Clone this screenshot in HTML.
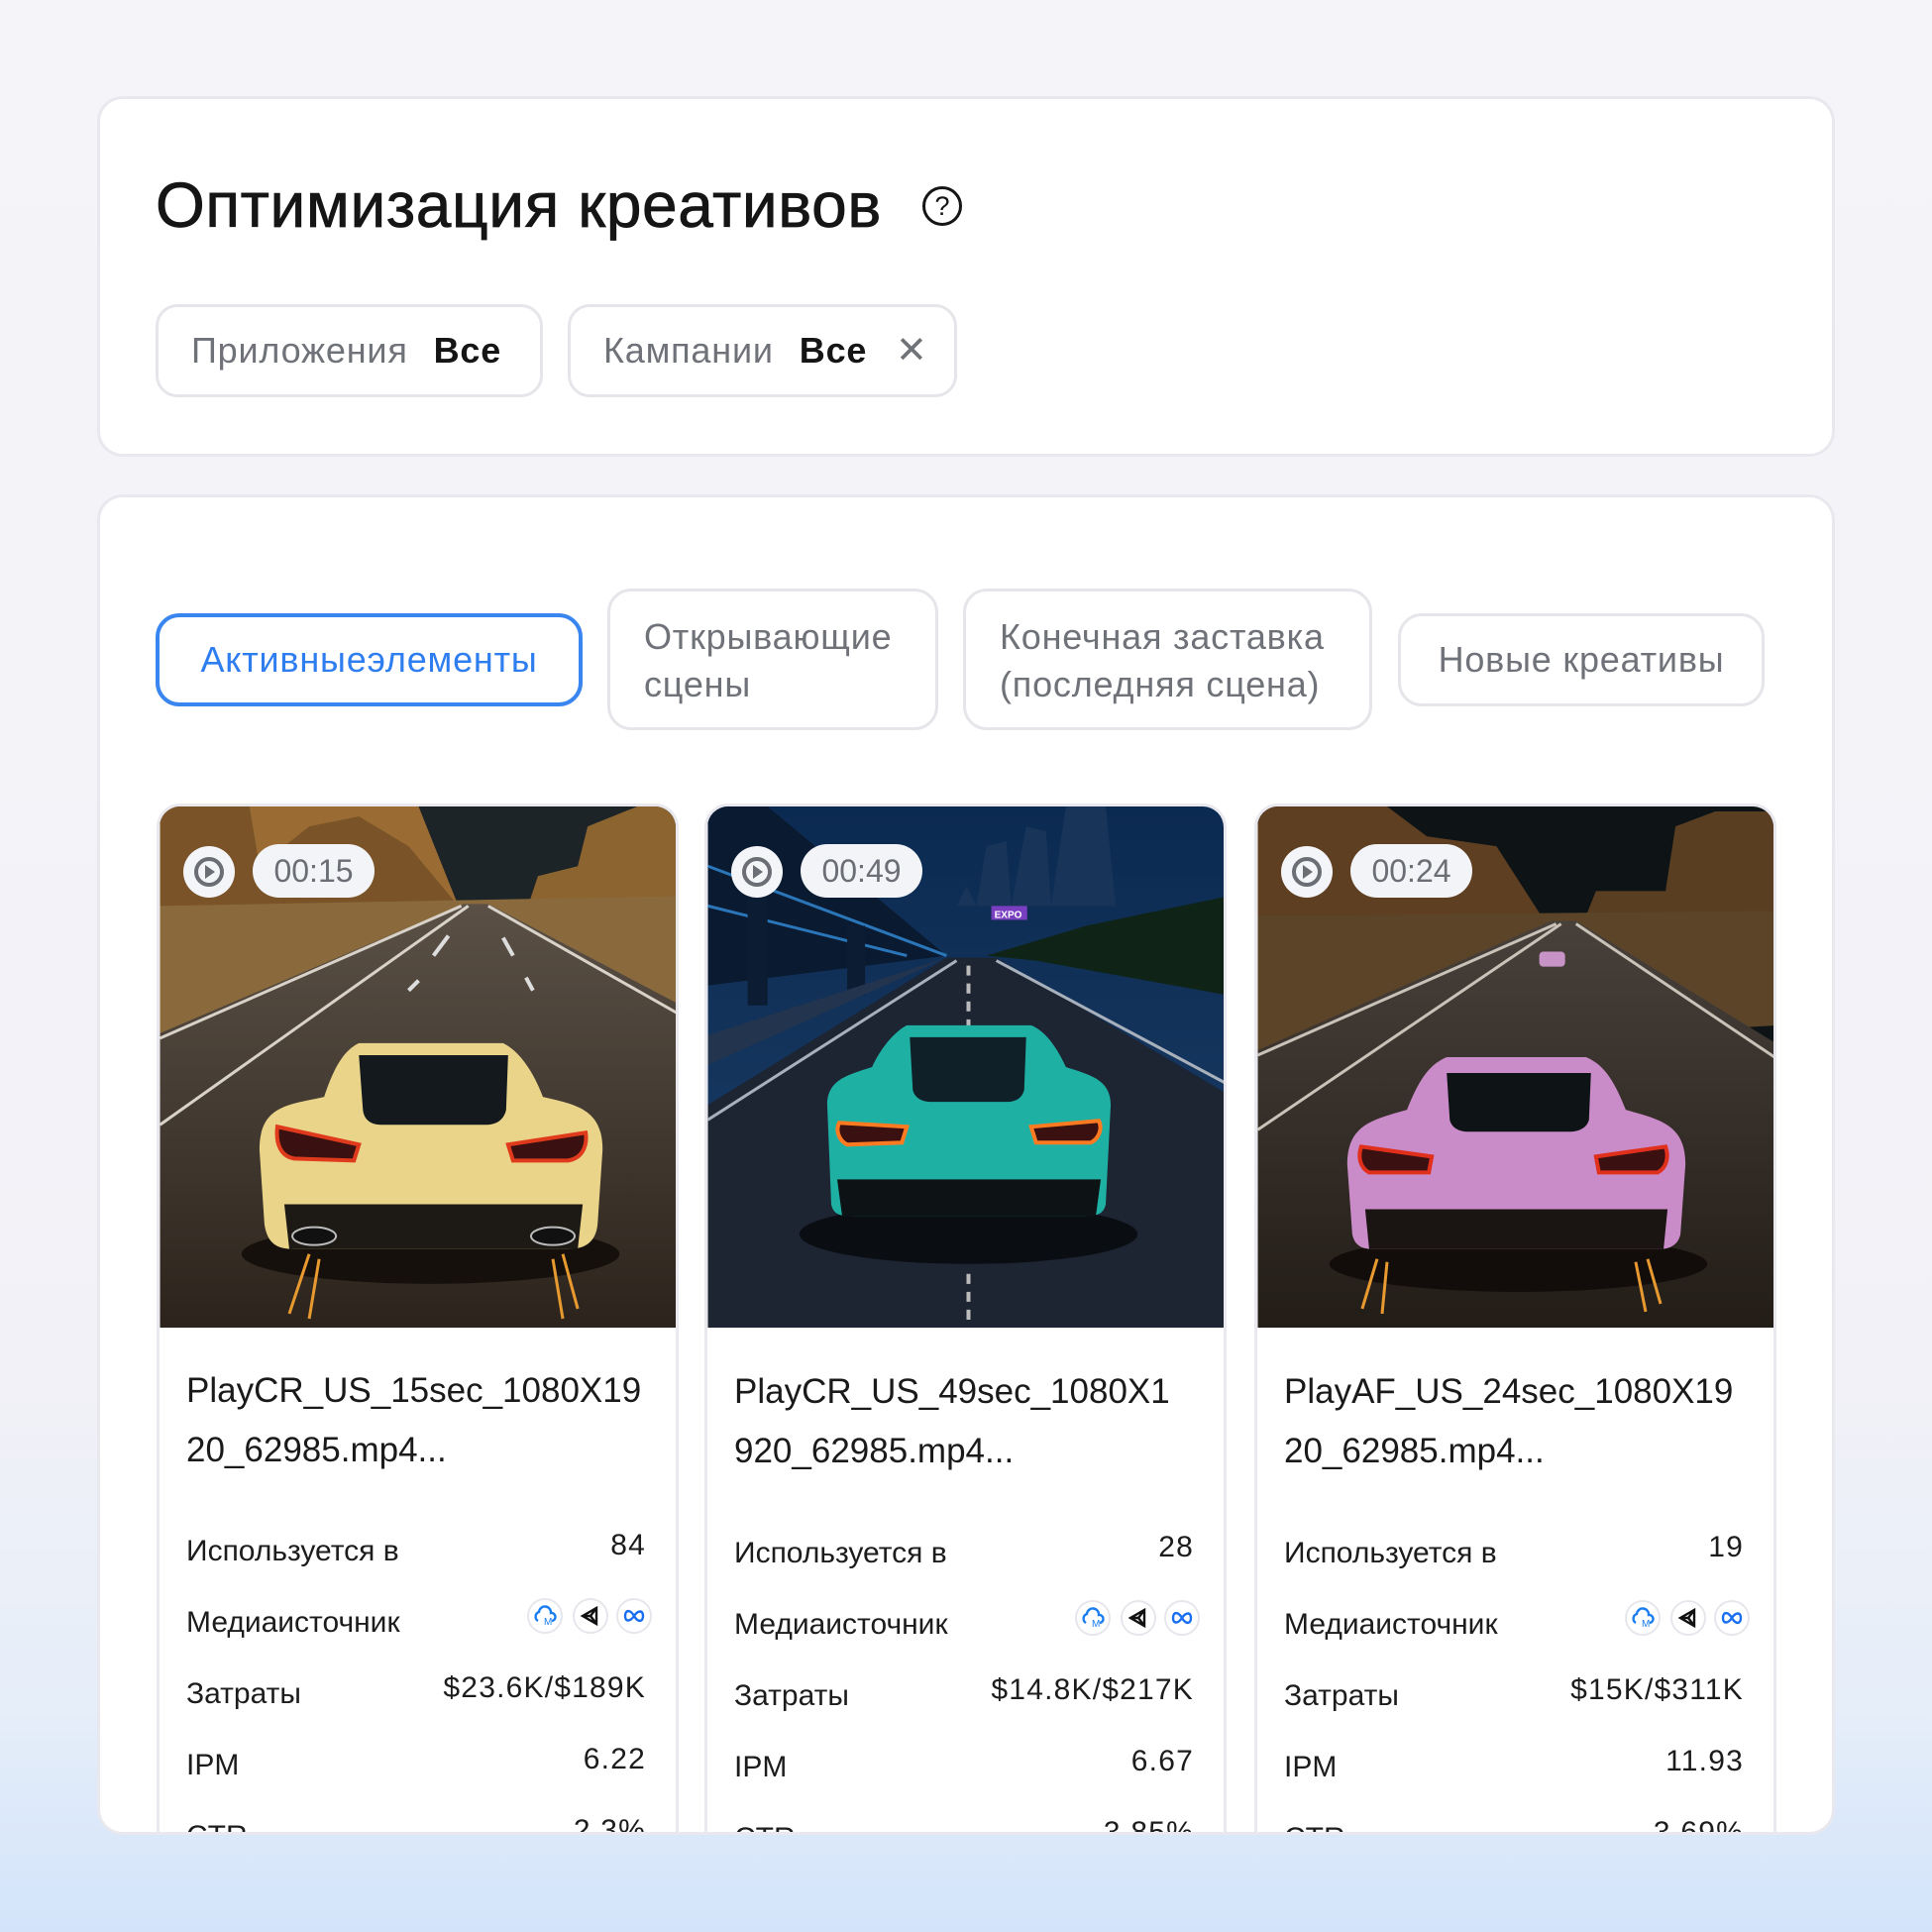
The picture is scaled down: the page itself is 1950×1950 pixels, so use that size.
<!DOCTYPE html>
<html><head><meta charset="utf-8">
<style>
*{box-sizing:border-box;margin:0;padding:0}
body{width:1950px;height:1950px;overflow:hidden;font-family:"Liberation Sans","DejaVu Sans",sans-serif;background:linear-gradient(180deg,#f5f5f9 0%,#f1f1f7 72%,#e6eef9 88%,#d3e4fa 100%);position:relative;color:#161616}
.panel{position:absolute;left:98px;width:1754px;background:#fff;border:3px solid #e8e8ee;border-radius:26px;overflow:hidden}
.title{position:absolute;left:157px;top:170px;font-size:64px;color:#151515;-webkit-text-stroke:0.7px #151515;letter-spacing:0.6px}
.help{position:absolute;left:931px;top:188px;width:40px;height:40px;border:3px solid #151515;border-radius:50%;font-size:27px;text-align:center;line-height:34px;color:#151515}
.chip{position:absolute;top:307px;height:94px;border:3px solid #e6e6ea;border-radius:22px;font-size:36px;line-height:88px;color:#6f7278;padding-left:33px;letter-spacing:0.8px}
.chip b{color:#151515;margin-left:26px}
.tab{position:absolute;border:3px solid #e6e6ea;border-radius:24px;font-size:36px;color:#6f7278;letter-spacing:0.8px}
.card{position:absolute;top:811px;width:527px;height:1200px;background:#fff;border:3px solid #e8e8ee;border-radius:24px;overflow:hidden}
.card svg{position:absolute;left:0;top:0}
.play{position:absolute;left:24px;top:40px;width:52px;height:52px;border-radius:50%;background:#f4f5f8}
.time{position:absolute;left:94px;top:38px;width:123px;height:54px;border-radius:27px;background:#f3f4f8;font-size:32px;line-height:54px;text-align:center;color:#6b6e75}
.fname{position:absolute;left:27px;top:560px;font-size:35px;line-height:60px;color:#1a1a1a;letter-spacing:0}
.row{position:absolute;left:27px;right:30px;height:40px;font-size:30px;color:#1c1c1c}
.row .l{position:absolute;left:0;top:0}
.row .r{position:absolute;right:0;top:-6px;letter-spacing:1.2px;font-size:30px}
.ic{position:absolute;top:-8px;width:36px;height:36px;border-radius:50%;border:2px solid #e6e7ec;background:#fff}
</style></head><body>

<div class="panel" style="top:97px;height:364px"></div>
<div class="title">Оптимизация креативов</div>
<div class="help">?</div>
<div class="chip" style="left:157px;width:391px">Приложения<b>Все</b></div>
<div class="chip" style="left:573px;width:393px">Кампании<b>Все</b><span style="position:absolute;left:328px;top:0;color:#6f7278;font-weight:bold;font-size:38px">✕</span></div>

<div class="panel" style="top:499px;height:1353px">
</div>
<div style="position:absolute;left:98px;top:499px;width:1754px;height:1353px;overflow:hidden;border-radius:26px">
<div class="tab" style="left:59px;top:120px;width:431px;height:94px;border:4px solid #3a86f0;color:#2f7ef0;line-height:86px;text-align:center">Активныеэлементы</div>
<div class="tab" style="left:515px;top:95px;width:334px;height:143px;padding:22px 0 0 34px;line-height:48px">Открывающие<br>сцены</div>
<div class="tab" style="left:874px;top:95px;width:413px;height:143px;padding:22px 0 0 34px;line-height:48px">Конечная заставка<br>(последняя сцена)</div>
<div class="tab" style="left:1313px;top:120px;width:370px;height:94px;line-height:88px;text-align:center">Новые креативы</div>
</div>

<div style="position:absolute;left:98px;top:499px;width:1754px;height:1350px;overflow:hidden;border-radius:0 0 26px 26px">
<div style="position:absolute;left:-98px;top:-499px;width:1950px;height:1950px">

<div class="card" style="left:158px">
<svg width="527" height="526" viewBox="0 0 524 524">
<defs><linearGradient id="r1" x1="0" y1="0" x2="0" y2="1"><stop offset="0" stop-color="#5a5046"/><stop offset="1" stop-color="#2c241c"/></linearGradient></defs>
<rect width="524" height="524" fill="#1c2427"/>
<path d="M0,0 L260,0 L300,100 L0,120Z" fill="#9a6c34"/>
<path d="M0,0 L90,0 L100,60 L150,20 L200,10 L250,40 L300,100 L0,110Z" fill="#7a5428"/>
<path d="M370,100 L380,70 L420,60 L430,20 L480,0 L524,0 L524,120Z" fill="#8c6430"/>
<path d="M0,100 L524,90 L524,220 L0,260Z" fill="#8a6a3c"/>
<path d="M305,98 L330,98 L524,200 L524,524 L0,524 L0,228Z" fill="url(#r1)"/>
<path d="M0,233 L303,100 M0,320 L310,100 M524,210 L330,100" stroke="#d8d2c8" stroke-width="3" fill="none"/>
<path d="M275,150 L290,130 M250,185 L260,175 M355,150 L345,132 M375,185 L368,172" stroke="#ddd" stroke-width="4"/>
<g>
<ellipse cx="272" cy="450" rx="190" ry="30" fill="#15100c"/>
<path d="M100,345 C100,300 130,300 165,292 C175,262 185,245 200,238 L345,238 C360,245 375,265 385,292 C420,300 445,305 445,345 L440,420 C438,440 425,445 410,445 L135,445 C118,445 108,440 105,420Z" fill="#e9d48a"/>
<path d="M200,250 L350,250 L348,305 C346,315 338,320 328,320 L222,320 C212,320 205,315 204,305Z" fill="#13191c"/>
<path d="M118,322 L200,340 L195,356 L135,354 C122,352 116,340 118,322Z" fill="#3a1010" stroke="#e03a1c" stroke-width="4"/>
<path d="M428,328 L350,340 L355,356 L410,356 C424,354 430,342 428,328Z" fill="#3a1010" stroke="#e03a1c" stroke-width="4"/>
<path d="M125,400 L425,400 L420,445 L130,445Z" fill="#1d1915"/>
<ellipse cx="155" cy="432" rx="22" ry="9" fill="#111" stroke="#bbb" stroke-width="2"/>
<ellipse cx="395" cy="432" rx="22" ry="9" fill="#111" stroke="#bbb" stroke-width="2"/>
<path d="M150,450 L130,510 M160,455 L150,515 M395,455 L405,515 M405,450 L420,505" stroke="#e89a30" stroke-width="3"/>
</g>
</svg>
<div class="play"><svg width="52" height="52" viewBox="0 0 52 52"><circle cx="26" cy="26" r="13" fill="none" stroke="#6b6e75" stroke-width="4"/><path d="M22,19 L32,26 L22,33Z" fill="#6b6e75"/></svg></div>
<div class="time">00:15</div>
<div class="fname">PlayCR_US_15sec_1080X19<br>20_62985.mp4...</div>
<div class="row" style="top:735px"><span class="l">Используется в</span><span class="r">84</span></div>
<div class="row" style="top:807px"><span class="l">Медиаисточник</span>
<span class="ic" style="right:84px"><svg width="32" height="32"><path d="M9,21 a5,5 0 0 1 1,-9 a6,6 0 0 1 12,1 a4,4 0 0 1 1,8" fill="none" stroke="#1a7ef0" stroke-width="2.4"/><text x="15" y="25" font-size="10" fill="#1a7ef0" font-family="Liberation Sans">M</text></svg></span>
<span class="ic" style="right:38px"><svg width="32" height="32"><path d="M8,16 L22,8 L22,24Z M22,8 L16,16 L22,24 M8,16 L16,16" fill="none" stroke="#111" stroke-width="2.4"/></svg></span>
<span class="ic" style="right:-6px"><svg width="32" height="32"><path d="M16,16 C12,9 7,10 7,16 C7,22 12,22 16,16 C20,10 25,10 25,16 C25,22 20,23 16,16Z" fill="none" stroke="#1a6ff0" stroke-width="2.4"/></svg></span></div>
<div class="row" style="top:879px"><span class="l">Затраты</span><span class="r">$23.6K/$189K</span></div>
<div class="row" style="top:951px"><span class="l">IPM</span><span class="r">6.22</span></div>
<div class="row" style="top:1023px"><span class="l">CTR</span><span class="r">2.3%</span></div>
</div>

<div class="card" style="left:711px">
<svg width="527" height="526" viewBox="0 0 524 524">
<defs><linearGradient id="s2" x1="0" y1="0" x2="0" y2="1"><stop offset="0" stop-color="#0b2a52"/><stop offset="1" stop-color="#1c3e66"/></linearGradient></defs>
<rect width="524" height="524" fill="url(#s2)"/>
<path d="M250,100 L260,80 L270,100 L280,40 L300,35 L305,100 L320,20 L340,25 L345,100 L360,0 L400,0 L410,100Z" fill="#183458"/>
<path d="M280,150 L380,120 L524,90 L524,190 L330,155Z" fill="#10240f" opacity="0.9"/>
<path d="M0,0 L60,0 L240,150 L0,180Z" fill="#0a1a30"/>
<path d="M0,60 L240,150 M0,100 L200,150" stroke="#2a76b8" stroke-width="3"/>
<rect x="40" y="90" width="20" height="110" fill="#0c1d33"/><rect x="140" y="120" width="18" height="70" fill="#0c1d33"/>
<path d="M240,152 L290,152 L524,290 L524,524 L0,524 L0,300Z" fill="#1d2432"/>
<path d="M0,260 L240,152 L0,230Z" fill="#22344e"/>
<path d="M0,315 L250,155 M524,280 L290,155" stroke="#a8b0bc" stroke-width="3" fill="none"/>
<path d="M262,160 L262,230 M262,470 L262,524" stroke="#bbb" stroke-width="4" stroke-dasharray="10 8"/>
<rect x="285" y="100" width="36" height="14" fill="#7a3fc0"/><text x="288" y="112" font-size="10" fill="#fff" font-family="Liberation Sans" font-weight="bold">EXPO</text>
<g>
<ellipse cx="262" cy="430" rx="170" ry="30" fill="#0a0d12"/>
<path d="M120,300 C120,275 140,270 165,262 C175,240 190,225 200,220 L325,220 C338,225 350,240 360,262 C385,270 405,275 405,300 L400,400 C398,410 390,412 380,412 L145,412 C133,412 126,410 124,400Z" fill="#1fb0a4"/>
<path d="M203,232 L320,232 L318,285 C316,293 310,297 300,297 L225,297 C215,297 208,293 206,285Z" fill="#102028"/>
<path d="M132,318 L200,322 L195,338 L140,340 C132,336 128,326 132,318Z" fill="#3a1010" stroke="#ff7a20" stroke-width="4"/>
<path d="M393,316 L325,322 L330,338 L385,338 C393,334 397,324 393,316Z" fill="#3a1010" stroke="#ff7a20" stroke-width="4"/>
<path d="M130,375 L395,375 L390,412 L135,412Z" fill="#0d1214"/>
</g>
</svg>
<div class="play"><svg width="52" height="52" viewBox="0 0 52 52"><circle cx="26" cy="26" r="13" fill="none" stroke="#6b6e75" stroke-width="4"/><path d="M22,19 L32,26 L22,33Z" fill="#6b6e75"/></svg></div>
<div class="time">00:49</div>
<div class="fname" style="top:561px">PlayCR_US_49sec_1080X1<br>920_62985.mp4...</div>
<div class="row" style="top:737px"><span class="l">Используется в</span><span class="r">28</span></div>
<div class="row" style="top:809px"><span class="l">Медиаисточник</span>
<span class="ic" style="right:84px"><svg width="32" height="32"><path d="M9,21 a5,5 0 0 1 1,-9 a6,6 0 0 1 12,1 a4,4 0 0 1 1,8" fill="none" stroke="#1a7ef0" stroke-width="2.4"/><text x="15" y="25" font-size="10" fill="#1a7ef0" font-family="Liberation Sans">M</text></svg></span>
<span class="ic" style="right:38px"><svg width="32" height="32"><path d="M8,16 L22,8 L22,24Z M22,8 L16,16 L22,24 M8,16 L16,16" fill="none" stroke="#111" stroke-width="2.4"/></svg></span>
<span class="ic" style="right:-6px"><svg width="32" height="32"><path d="M16,16 C12,9 7,10 7,16 C7,22 12,22 16,16 C20,10 25,10 25,16 C25,22 20,23 16,16Z" fill="none" stroke="#1a6ff0" stroke-width="2.4"/></svg></span></div>
<div class="row" style="top:881px"><span class="l">Затраты</span><span class="r">$14.8K/$217K</span></div>
<div class="row" style="top:953px"><span class="l">IPM</span><span class="r">6.67</span></div>
<div class="row" style="top:1025px"><span class="l">CTR</span><span class="r">3.85%</span></div>
</div>

<div class="card" style="left:1266px">
<svg width="527" height="526" viewBox="0 0 524 524">
<defs><linearGradient id="r3" x1="0" y1="0" x2="0" y2="1"><stop offset="0" stop-color="#48403a"/><stop offset="1" stop-color="#231d17"/></linearGradient></defs>
<rect width="524" height="524" fill="#0e1416"/>
<path d="M0,0 L130,0 L170,30 L240,40 L285,110 L0,130Z" fill="#5e3f22"/>
<path d="M330,110 L340,85 L410,85 L420,20 L460,5 L524,5 L524,130Z" fill="#5a3e22"/>
<path d="M0,110 L524,105 L524,220 L0,250Z" fill="#5c4428"/>
<path d="M295,115 L320,115 L524,240 L524,524 L0,524 L0,245Z" fill="url(#r3)"/>
<path d="M0,250 L300,118 M0,325 L305,118 M524,255 L320,118" stroke="#c8c2b8" stroke-width="3" fill="none"/>
<rect x="283" y="146" width="26" height="15" rx="4" fill="#c894c8"/>
<g>
<ellipse cx="262" cy="460" rx="190" ry="28" fill="#120d0a"/>
<path d="M90,360 C90,320 115,315 150,305 C160,280 170,260 190,252 L330,252 C350,260 360,280 370,305 C405,315 430,320 430,360 L425,430 C423,440 415,445 405,445 L115,445 C103,445 97,440 95,430Z" fill="#c98cc8"/>
<path d="M190,268 L335,268 L333,315 C331,323 323,327 313,327 L212,327 C202,327 195,323 193,315Z" fill="#0e1416"/>
<path d="M104,342 L175,352 L172,368 L112,368 C104,364 100,354 104,342Z" fill="#3a1010" stroke="#e0301c" stroke-width="4"/>
<path d="M410,342 L340,352 L343,368 L402,368 C410,364 414,354 410,342Z" fill="#3a1010" stroke="#e0301c" stroke-width="4"/>
<path d="M108,405 L412,405 L408,445 L112,445Z" fill="#1a1412"/>
<path d="M120,455 L105,505 M130,458 L125,510 M380,458 L390,508 M392,455 L405,500" stroke="#e89a30" stroke-width="3"/>
</g>
</svg>
<div class="play"><svg width="52" height="52" viewBox="0 0 52 52"><circle cx="26" cy="26" r="13" fill="none" stroke="#6b6e75" stroke-width="4"/><path d="M22,19 L32,26 L22,33Z" fill="#6b6e75"/></svg></div>
<div class="time">00:24</div>
<div class="fname" style="top:561px">PlayAF_US_24sec_1080X19<br>20_62985.mp4...</div>
<div class="row" style="top:737px"><span class="l">Используется в</span><span class="r">19</span></div>
<div class="row" style="top:809px"><span class="l">Медиаисточник</span>
<span class="ic" style="right:84px"><svg width="32" height="32"><path d="M9,21 a5,5 0 0 1 1,-9 a6,6 0 0 1 12,1 a4,4 0 0 1 1,8" fill="none" stroke="#1a7ef0" stroke-width="2.4"/><text x="15" y="25" font-size="10" fill="#1a7ef0" font-family="Liberation Sans">M</text></svg></span>
<span class="ic" style="right:38px"><svg width="32" height="32"><path d="M8,16 L22,8 L22,24Z M22,8 L16,16 L22,24 M8,16 L16,16" fill="none" stroke="#111" stroke-width="2.4"/></svg></span>
<span class="ic" style="right:-6px"><svg width="32" height="32"><path d="M16,16 C12,9 7,10 7,16 C7,22 12,22 16,16 C20,10 25,10 25,16 C25,22 20,23 16,16Z" fill="none" stroke="#1a6ff0" stroke-width="2.4"/></svg></span></div>
<div class="row" style="top:881px"><span class="l">Затраты</span><span class="r">$15K/$311K</span></div>
<div class="row" style="top:953px"><span class="l">IPM</span><span class="r">11.93</span></div>
<div class="row" style="top:1025px"><span class="l">CTR</span><span class="r">3.69%</span></div>
</div>

</div>
</div>
</body></html>
